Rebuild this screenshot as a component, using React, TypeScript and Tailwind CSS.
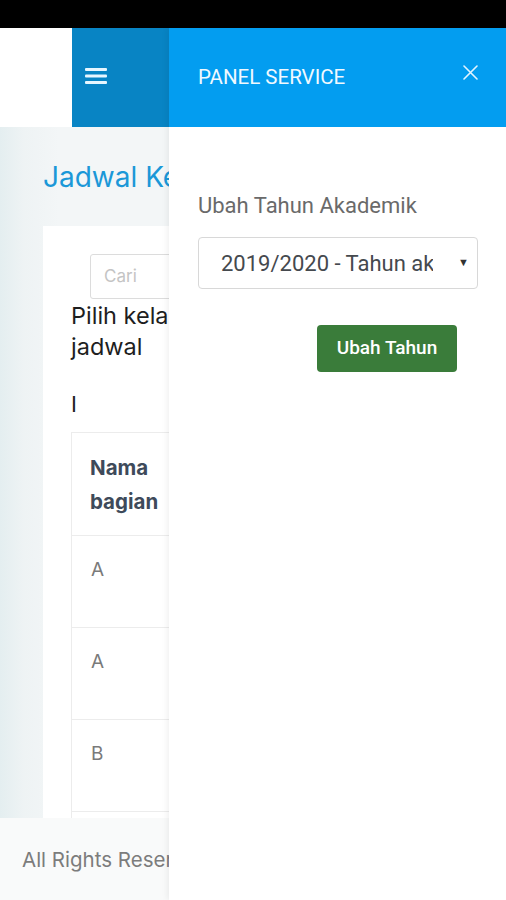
const rows = ["A", "A", "B", "B"];

function Hamburger() {
  return (
    <svg width="22" height="16" viewBox="0 0 22 16" fill="none">
      <rect x="0" y="0" width="22" height="3" rx="1" fill="#e6f6ff" />
      <rect x="0" y="6.5" width="22" height="3" rx="1" fill="#e6f6ff" />
      <rect x="0" y="13" width="22" height="3" rx="1" fill="#e6f6ff" />
    </svg>
  );
}

function Close() {
  return (
    <svg width="15" height="15" viewBox="0 0 15 15" fill="none">
      <path d="M1 1L14 14M14 1L1 14" stroke="#e3f4ff" strokeWidth="1.6" strokeLinecap="round" />
    </svg>
  );
}

export default function App() {
  return (
    <div className="w-[506px] h-[900px] overflow-hidden flex flex-col bg-white">
      <div className="h-[28px] bg-black shrink-0" />

      <div className="flex-1 flex min-h-0">
        {/* page behind the panel, only the left strip is visible */}
        <div className="w-[169px] shrink-0 flex flex-col overflow-hidden font-['Inter',sans-serif]">
          <header className="h-[99px] shrink-0 flex">
            <div className="w-[72px] shrink-0 bg-white" />
            <div className="flex-1 bg-[#0884c4] flex items-center pl-[13px] pb-[3px]">
              <Hamburger />
            </div>
          </header>

          <main className="flex-1 min-h-0 overflow-hidden bg-[linear-gradient(90deg,#e4eef0_0%,#eef3f4_14%,#f3f6f7_35%)] pl-[43px]">
            <h1 className="text-[28px] leading-[30px] text-[#1b98d8] mt-[35px] whitespace-nowrap">
              Jadwal Kegiatan
            </h1>

            <div className="w-[700px] bg-white mt-[34px] h-[592px] pl-[28px] pt-[28px]">
              <div className="ml-[19px] w-[240px] h-[45px] border border-[#dcdcdc] rounded-[3px] flex items-center px-[13px] text-[17px] text-[#c4c4c4]">
                Cari
              </div>

              <p className="w-[130px] text-[23.5px] leading-[31px] text-[#1e1e1e] mt-[1px]">
                Pilih kelas jadwal
              </p>

              <p className="text-[22px] leading-[31px] text-[#1e1e1e] mt-[27px]">I</p>

              <div className="mt-[12px] border-l border-t border-[#ececec] w-[500px]">
                <div className="h-[103px] border-b border-[#ececec] px-[18px] pt-[18px]">
                  <div className="text-[20.5px] leading-[34px] font-bold text-[#3e4a5a] w-[80px]">
                    Nama bagian
                  </div>
                </div>
                {rows.map((r, i) => (
                  <div
                    key={i}
                    className="h-[92px] border-b border-[#ececec] px-[19px] pt-[20px] text-[19px] text-[#7a7a7a]"
                  >
                    {r}
                  </div>
                ))}
              </div>
            </div>
          </main>

          <footer className="h-[82px] shrink-0 bg-[#f9fafa] flex items-center pl-[22px] pt-[2px] text-[20.5px] text-[#7c7c7c] whitespace-nowrap">
            All Rights Reserved
          </footer>
        </div>

        {/* side panel */}
        <aside className="flex-1 bg-white shadow-[-2px_0_6px_rgba(0,0,0,0.06)] flex flex-col font-['Roboto',sans-serif]">
          <div className="h-[99px] shrink-0 bg-[#039df0] flex items-center justify-between pl-[29px] pr-[28px]">
            <span className="text-[20.5px] text-[#f0f9ff]">PANEL SERVICE</span>
            <span className="-mt-[11px]">
              <Close />
            </span>
          </div>

          <div className="pl-[29px] pt-[66px]">
            <div className="text-[22px] leading-[26px] text-[#6a6a6a]">Ubah Tahun Akademik</div>

            <div className="mt-[18px] w-[280px] h-[52px] border border-[#d8d8d8] rounded-[4px] flex items-center justify-between pl-[22px] pr-[8px] text-[22px] text-[#45494e]">
              <span className="whitespace-nowrap overflow-hidden w-[212px]">2019/2020 - Tahun akademik</span>
              <span className="text-[11px] text-[#333]">▼</span>
            </div>

            <button className="mt-[36px] ml-[119px] w-[140px] h-[47px] bg-[#3a7c3a] rounded-[4px] text-white text-[19px] font-medium">
              Ubah Tahun
            </button>
          </div>
        </aside>
      </div>
    </div>
  );
}
